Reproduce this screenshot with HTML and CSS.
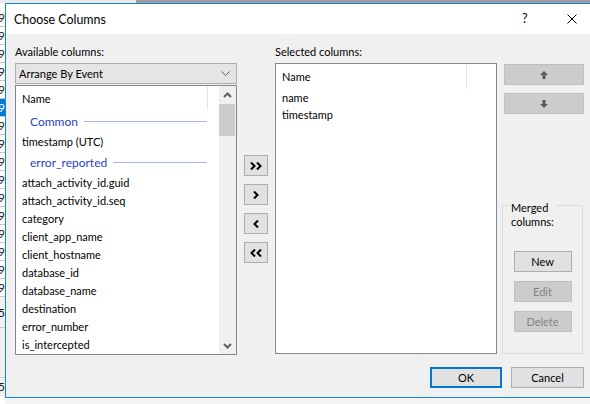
FILE: index.html
```html
<!DOCTYPE html>
<html>
<head>
<meta charset="utf-8">
<link rel="stylesheet" href="styles.css">
</head>
<body>
<div class="screen">
  <div class="topband"><div class="tb-light"></div><div class="tb-dark"></div></div>
  <div class="main">
    <div class="appstrip">
      <div class="strip-top"></div>
      <div class="srow"><span>9</span></div>
      <div class="srow"><span>9</span></div>
      <div class="srow"><span>9</span></div>
      <div class="srow"><span>9</span></div>
      <div class="srow"><span>9</span></div>
      <div class="srow sel"><span>9</span></div>
      <div class="srow"><span>9</span></div>
      <div class="srow"><span>9</span></div>
      <div class="srow"><span>9</span></div>
      <div class="srow"><span>9</span></div>
      <div class="srow"><span>9</span></div>
      <div class="srow"><span>9</span></div>
      <div class="srow"><span>9</span></div>
      <div class="srow"><span>9</span></div>
      <div class="srow"><span>9</span></div>
      <div class="srow"><span>9</span></div>
      <div class="srow tall"><span>5</span></div>
      <div class="strip-gap"></div>
      <div class="srow plain"><span>52</span></div>
    </div>
    <div class="dialog">
      <div class="titlebar">
        <span class="title">Choose Columns</span>
        <span class="help">?</span>
        <span class="close"><svg width="10" height="10" viewBox="0 0 10 10"><path d="M0.5 0.5 L9.5 9.5 M9.5 0.5 L0.5 9.5" stroke="#000" stroke-width="1" fill="none"/></svg></span>
      </div>
      <div class="body">
        <div class="columns">
          <div class="col-left">
            <div class="label">Available columns:</div>
            <div class="combo">
              <span>Arrange By Event</span>
              <svg width="9" height="5" viewBox="0 0 9 5"><path d="M0.5 0.5 L4.5 4.5 L8.5 0.5" stroke="#606060" stroke-width="1" fill="none"/></svg>
            </div>
            <div class="list list-left">
              <div class="list-main">
                <div class="list-header"><span class="hdr-cell">Name</span></div>
                <div class="group"><span>Common</span><i class="group-line"></i></div>
                <div class="item">timestamp (UTC)</div>
                <div class="group"><span>error_reported</span><i class="group-line"></i></div>
                <div class="item">attach_activity_id.guid</div>
                <div class="item">attach_activity_id.seq</div>
                <div class="item">category</div>
                <div class="item">client_app_name</div>
                <div class="item">client_hostname</div>
                <div class="item">database_id</div>
                <div class="item">database_name</div>
                <div class="item">destination</div>
                <div class="item">error_number</div>
                <div class="item">is_intercepted</div>
              </div>
              <div class="scrollbar">
                <div class="sb-arrow"><svg width="9" height="6" viewBox="0 0 9 6"><path d="M1 5 L4.5 1.5 L8 5" stroke="#606060" stroke-width="2" fill="none"/></svg></div>
                <div class="sb-thumb"></div>
                <div class="sb-track"></div>
                <div class="sb-arrow"><svg width="9" height="6" viewBox="0 0 9 6"><path d="M1 1 L4.5 4.5 L8 1" stroke="#606060" stroke-width="2" fill="none"/></svg></div>
              </div>
            </div>
          </div>
          <div class="col-mid">
            <div class="btn mid-btn"><svg width="12" height="8" viewBox="0 0 12 8"><path d="M1 0.5 L4.5 4 L1 7.5 M7 0.5 L10.5 4 L7 7.5" stroke="#000" stroke-width="2" fill="none"/></svg></div>
            <div class="btn mid-btn"><svg width="6" height="8" viewBox="0 0 6 8"><path d="M1 0.5 L4.5 4 L1 7.5" stroke="#000" stroke-width="2" fill="none"/></svg></div>
            <div class="btn mid-btn"><svg width="6" height="8" viewBox="0 0 6 8"><path d="M5 0.5 L1.5 4 L5 7.5" stroke="#000" stroke-width="2" fill="none"/></svg></div>
            <div class="btn mid-btn"><svg width="12" height="8" viewBox="0 0 12 8"><path d="M5 0.5 L1.5 4 L5 7.5 M11 0.5 L7.5 4 L11 7.5" stroke="#000" stroke-width="2" fill="none"/></svg></div>
          </div>
          <div class="col-right">
            <div class="label">Selected columns:</div>
            <div class="list list-right">
              <div class="list-header hdr-right"><span class="hdr-cell hdr-wide">Name</span></div>
              <div class="item item-r">name</div>
              <div class="item item-r">timestamp</div>
            </div>
          </div>
          <div class="col-side">
            <div class="btn disabled side-btn"><svg width="8" height="8" viewBox="0 0 8 8"><path d="M4 0 L8 4 H5.5 V8 H2.5 V4 H0 Z" fill="#5a5a5a"/></svg></div>
            <div class="btn disabled side-btn"><svg width="8" height="8" viewBox="0 0 8 8"><path d="M4 8 L8 4 H5.5 V0 H2.5 V4 H0 Z" fill="#5a5a5a"/></svg></div>
            <div class="groupbox">
              <div class="group-label">Merged<br>columns:</div>
              <div class="group-btns">
                <div class="btn gbtn">New</div>
                <div class="btn gbtn disabled">Edit</div>
                <div class="btn gbtn disabled">Delete</div>
              </div>
            </div>
          </div>
        </div>
        <div class="footer">
          <div class="btn fbtn default">OK</div>
          <div class="btn fbtn">Cancel</div>
        </div>
      </div>
    </div>
  </div>
</div>
</body>
</html>
```

FILE: styles.css
```css
* { box-sizing: border-box; }
html, body { margin: 0; padding: 0; }
body {
  font-family: Lato, "Noto Sans", "DejaVu Sans", sans-serif;
  font-size: 11px;
  color: #000;
  background: #f3f3f3;
}
.screen {
  width: 590px;
  height: 404px;
  overflow: hidden;
  background: #f3f3f3;
}
.topband { height: 3px; display: flex; }
.tb-light { width: 136px; background: #e9e9e9; }
.tb-dark { flex: 1; background: #9c9c9c; }
.main { display: flex; align-items: flex-start; height: 401px; }

.appstrip {
  width: 5px;
  height: 401px;
  overflow: hidden;
  background: #fff;
  flex: none;
}
.strip-top { height: 6px; }
.srow {
  height: 18px;
  border-bottom: 1px solid #c8c8c8;
  line-height: 17px;
  font-size: 12px;
  white-space: nowrap;
}
.srow span { display: block; margin-left: -2px; color: #222; }
.srow.sel { background: #0078d7; }
.srow.sel span { color: #fff; }
.srow.tall { height: 31px; line-height: 31px; background: #f0f0f0; }
.strip-gap { height: 50px; background: #f0f0f0; border-bottom: 1px solid #c8c8c8; }
.srow.plain { background: #f0f0f0; border: none; }

.dialog {
  width: 585px;
  height: 395px;
  border: 1px solid #1883d7;
  border-right: none;
  background: #f0f0f0;
  flex: none;
}
.titlebar {
  height: 30px;
  background: #fff;
  display: flex;
  align-items: center;
  position: relative;
}
.title { margin-left: 8px; font-size: 12.4px; }
.help { position: absolute; left: 516px; top: 7px; font-size: 12.5px; }
.close { position: absolute; left: 561px; top: 10px; line-height: 0; }

.body {
  height: 363px;
  padding: 10px 6px 0 9px;
}
.columns { display: flex; height: 311px; }
.label { height: 14px; line-height: 14px; padding-top: 1px; margin-bottom: 5px; }

.col-left { width: 222px; display: flex; flex-direction: column; }
.combo {
  height: 21px;
  background: #e5e5e5;
  border: 1px solid #acacac;
  display: flex;
  align-items: center;
  justify-content: space-between;
  padding: 0 6px 0 3px;
  margin-bottom: 1px;
}
.list {
  background: #fff;
  border: 1px solid #828790;
}
.list-left { height: 270px; display: flex; }
.list-main { flex: 1; overflow: hidden; }
.list-header {
  height: 24px;
  display: flex;
  align-items: center;
}
.hdr-right { height: 25px; }
.hdr-cell {
  width: 192px;
  height: 100%;
  display: flex;
  align-items: center;
  padding-left: 6px;
  border-right: 1px solid #e5e5e5;
}
.hdr-wide { width: 191px; }
.group {
  height: 23px;
  display: flex;
  align-items: center;
  padding-left: 14px;
  padding-right: 12px;
  color: #2b3fc4;
  font-size: 12px;
}
.group-line {
  flex: 1;
  height: 1px;
  background: #a6b9e6;
  margin-left: 6px;
}
.item {
  height: 18px;
  line-height: 18px;
  padding-left: 6px;
  white-space: nowrap;
}
.group + .item { line-height: 17px; }
.item-r { height: 17px; line-height: 17px; }
.scrollbar {
  width: 17px;
  background: #f0f0f0;
  display: flex;
  flex-direction: column;
}
.sb-arrow {
  height: 17px;
  display: flex;
  align-items: center;
  justify-content: center;
}
.sb-thumb { height: 32px; background: #cdcdcd; margin: 1px 1px 0 0; }
.sb-track { flex: 1; }

.col-mid {
  width: 24px;
  margin: 0 7px;
  padding-top: 111px;
  display: flex;
  flex-direction: column;
  gap: 8px;
}
.btn {
  background: #e1e1e1;
  border: 1px solid #adadad;
  display: flex;
  align-items: center;
  justify-content: center;
  height: 21px;
}
.btn.disabled { background: #cccccc; border-color: #bfbfbf; color: #838383; }
.mid-btn { width: 24px; }

.col-right { width: 222px; display: flex; flex-direction: column; }
.list-right { height: 291px; }

.col-side {
  width: 80px;
  margin-left: 7px;
  padding-top: 20px;
  display: flex;
  flex-direction: column;
}
.side-btn { width: 80px; }
.side-btn + .side-btn { margin-top: 8px; }
.groupbox {
  margin-top: 91px;
  margin-left: -2px;
  width: 81px;
  height: 149px;
  border: 1px solid #dcdcdc;
}
.group-label {
  display: inline-block;
  margin: -5px 0 0 7px;
  padding: 0 2px 0 1px;
  background: #f0f0f0;
  line-height: 14px;
}
.group-btns {
  display: flex;
  flex-direction: column;
  align-items: center;
  gap: 9px;
  margin-top: 22px;
}
.gbtn { width: 58px; }

.footer {
  margin-top: 12px;
  display: flex;
  justify-content: flex-end;
  gap: 9px;
}
.fbtn { width: 73px; }
.fbtn.default { width: 72px; border: 2px solid #0078d7; }
```
